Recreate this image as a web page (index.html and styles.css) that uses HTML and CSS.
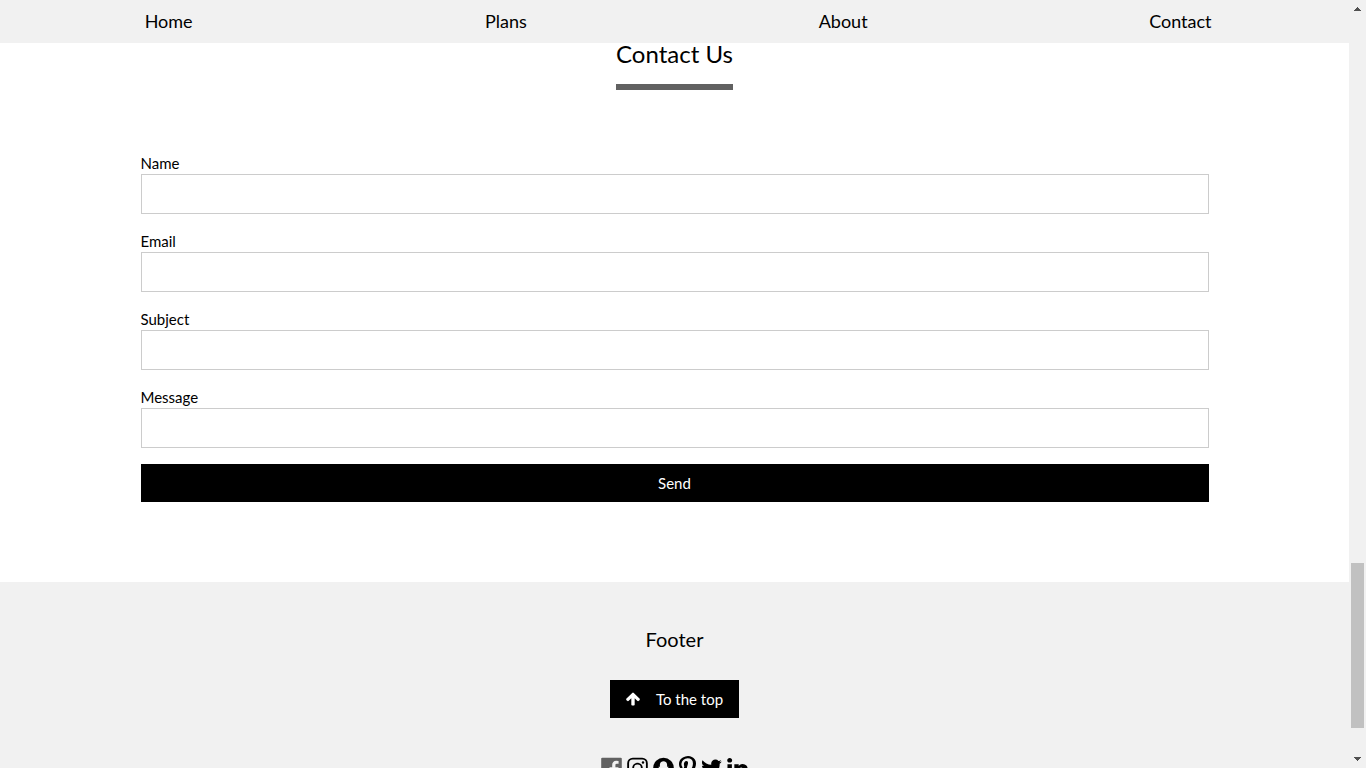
FILE: index.html
```html
<!DOCTYPE html>
<html lang="en">
<head>
<meta charset="utf-8">
<title>Contact Us</title>
<link rel="stylesheet" href="styles.css">
</head>
<body>
<div class="viewport">
  <div class="page">
    <nav class="nav">
      <a href="#home">Home</a>
      <a href="#plans">Plans</a>
      <a href="#about">About</a>
      <a href="#contact">Contact</a>
    </nav>
    <main class="contact" id="contact">
      <h2 class="title">Contact Us</h2>
      <form class="form">
        <div class="field"><label for="name">Name</label><input id="name" type="text"></div>
        <div class="field"><label for="email">Email</label><input id="email" type="text"></div>
        <div class="field"><label for="subject">Subject</label><input id="subject" type="text"></div>
        <div class="field"><label for="message">Message</label><input id="message" type="text"></div>
        <button class="send" type="button">Send</button>
      </form>
    </main>
    <footer class="footer">
      <h3 class="footer-title">Footer</h3>
      <a class="top" href="#home">
        <svg class="arrow" viewBox="96 128 1600 1600" aria-hidden="true"><path d="M1675 971q0 51-37 90l-75 75q-38 38-91 38-54 0-90-38l-294-293v704q0 52-37.500 84.500t-90.500 32.500h-128q-53 0-90.500-32.500t-37.500-84.500v-704l-294 293q-36 38-90 38t-90-38l-75-75q-38-38-38-90 0-53 38-91l651-651q35-37 90-37 54 0 91 37l651 651q37 39 37 91z"/></svg>
        <span>To the top</span>
      </a>
      <div class="social">
        <a class="facebook" href="#facebook" aria-label="Facebook"><svg viewBox="128 0 1536 1792"><path d="M1579 128q35 0 60 25t25 60v1366q0 35-25 60t-60 25h-391v-595h199l30-232h-229v-148q0-56 23.500-84t91.500-28l122-1v-207q-63-9-178-9-136 0-217.500 80t-81.500 226v171h-200v232h200v595h-735q-35 0-60-25t-25-60v-1366q0-35 25-60t60-25h1366z"/></svg></a>
        <a href="#instagram" aria-label="Instagram"><svg viewBox="128 0 1536 1792"><rect x="197" y="197" width="1398" height="1398" rx="350" fill="none" stroke="currentColor" stroke-width="138"/><circle cx="896" cy="896" r="325" fill="none" stroke="currentColor" stroke-width="138"/><circle cx="1306" cy="486" r="92"/></svg></a>
        <a href="#snapchat" aria-label="Snapchat"><svg viewBox="128 0 1536 1792"><circle cx="896" cy="896" r="768"/><path fill="#f1f1f1" d="M896 400c-170 0-270 120-270 270v130c-50 20-100-20-110 30 0 50 100 60 100 110-20 110-120 180-200 200 10 80 110 60 130 130 80-10 130 0 180 40 110 80 230 80 340 0 50-40 100-50 180-40 20-70 120-50 130-130-80-20-180-90-200-200 0-50 100-60 100-110-10-50-60-10-110-30V670c0-150-100-270-270-270z"/></svg></a>
        <a class="pinterest" href="#pinterest" aria-label="Pinterest"><svg viewBox="256 0 1280 1792"><path d="M256 597q0-108 37.500-203.500t103.500-166.500 152-123 185-78 202-26q158 0 294 66.500t221 193.500 85 287q0 96-19 188t-60 177-100 149.500-145 103-189 38.500q-68 0-135-32t-96-88q-10 39-28 112.500t-23.500 95-20.500 71-26 71-32 62.500-46 77.500-62 86.500l-14 5-9-10q-15-157-15-188 0-92 21.500-206.500t66.500-287.500 52-203q-32-65-32-169 0-83 52-156t132-73q61 0 95 40.500t34 102.500q0 66-44 191t-44 187q0 63 45 104.500t109 41.500q55 0 102-25t78.500-68 56-95 38-110.500 20-111 6.500-99.500q0-173-109.500-269.500t-285.500-96.500q-200 0-334 129.500t-134 328.500q0 44 12.500 85t27 65 27 45.500 12.500 30.500q0 28-15 73t-37 45q-2 0-17-3-51-15-90.500-56t-61-94.500-32.500-108-11-106.500z"/></svg></a>
        <a href="#twitter" aria-label="Twitter"><svg viewBox="100 0 1600 1792"><path d="M1684 408q-67 98-162 167 1 14 1 42 0 130-38 259.500t-115.500 248.500-184.500 210.500-258 146-323 54.500q-271 0-496-145 35 4 78 4 225 0 401-138-105-2-188-64.500t-114-159.500q33 5 61 5 43 0 85-11-112-23-185.500-111.500t-73.500-205.500v-4q68 38 146 41-66-44-105-115t-39-154q0-88 44-163 121 149 294.500 238.500t371.500 99.500q-8-38-8-74 0-134 94.500-228.500t228.500-94.500q140 0 236 102 109-21 205-78-37 115-142 178 93-10 186-50z"/></svg></a>
        <a href="#linkedin" aria-label="LinkedIn"><svg viewBox="128 0 1536 1792"><path d="M477 625v991h-330v-991h330zm21-306q1 73-50.500 122t-135.500 49h-2q-82 0-132-49t-50-122q0-74 51.500-122.500t134.500-48.500 133 48.500 51 122.500zm1166 729v568h-329v-530q0-105-40.500-164.500t-126.500-59.500q-63 0-105.500 34.500t-63.500 85.500q-11 30-11 81v553h-329q2-399 2-647t-1-296l-1-48h329v144h-2q20-32 41-56t56.500-52 87-43.500 114.500-15.500q171 0 275 113.500t104 332.500z"/></svg></a>
      </div>
    </footer>
  </div>
  <div class="scrollbar" aria-hidden="true">
    <svg class="cap" viewBox="0 0 17 17" shape-rendering="crispEdges"><path d="M8 7h1v1h1v1h1v1h1v1H5v-1h1V9h1V8h1z"/></svg>
    <div class="track"><div class="thumb"></div></div>
    <svg class="cap" viewBox="0 0 17 17" shape-rendering="crispEdges"><path d="M5 6h7v1h-1v1h-1v1H9v1H8V9H7V8H6V7H5z"/></svg>
  </div>
</div>
</body>
</html>
```
FILE: styles.css
```css
* { box-sizing: border-box; }
body {
  margin: 0;
  font: 15px/22px Lato, sans-serif;
  color: #000;
  background: #fff;
}
.viewport { display: flex; height: 100vh; overflow: hidden; }
.page { flex: 1; min-width: 0; overflow: hidden; }
.nav {
  display: grid;
  grid-template-columns: repeat(4, 1fr);
  background: #f1f1f1;
}
.nav a {
  padding: 8px 16px;
  font-size: 18px;
  line-height: 27px;
  text-align: center;
  color: inherit;
  text-decoration: none;
}
.contact {
  display: flex;
  flex-direction: column;
  align-items: center;
  padding-bottom: 80px;
}
.title {
  margin: 0 0 62px;
  padding-bottom: 19px;
  border-bottom: 6px solid #616161;
  font-size: 24px;
  font-weight: 400;
  line-height: 22px;
}
.form { width: 100%; max-width: 1100px; padding: 0 16px; }
.field { margin-bottom: 16px; }
.field label { display: block; }
.field input {
  display: block;
  width: 100%;
  height: 40px;
  padding: 8px;
  border: 1px solid #ccc;
  background: #fff;
  font: inherit;
}
.send {
  display: block;
  width: 100%;
  padding: 8px 16px;
  border: 0;
  background: #000;
  color: #fff;
  font: inherit;
}
.footer {
  display: flex;
  flex-direction: column;
  align-items: center;
  padding: 42px 16px 64px;
  background: #f1f1f1;
}
.footer-title {
  margin: 0 0 26px;
  font-size: 20px;
  font-weight: 400;
  line-height: 30px;
}
.top {
  display: flex;
  align-items: center;
  gap: 16px;
  padding: 8px 16px;
  background: #000;
  color: #fff;
  text-decoration: none;
}
.arrow { width: 14px; height: 14px; fill: currentColor; }
.social { display: flex; gap: 5px; margin-top: 38px; }
.social a { display: block; color: #000; }
.social .facebook { color: #616161; }
.social svg { display: block; width: 21px; height: 24px; fill: currentColor; }
.social .pinterest svg { width: 17px; }
.scrollbar {
  display: flex;
  flex-direction: column;
  width: 17px;
  background: #f1f1f1;
}
.cap { width: 17px; height: 17px; fill: #505050; }
.track { flex: 1; padding: 0 2px; display: flex; flex-direction: column; justify-content: flex-end; }
.thumb { height: 165px; margin-bottom: 23px; background: #c1c1c1; }
```
